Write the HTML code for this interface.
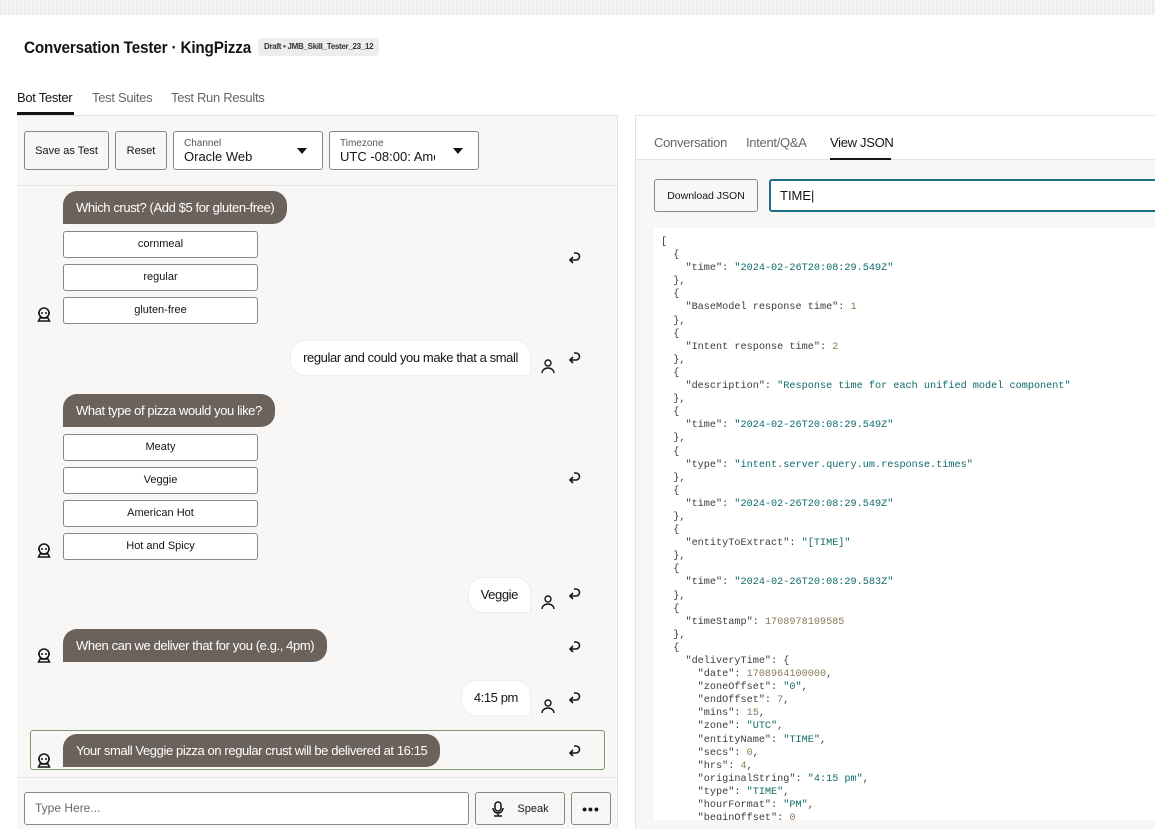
<!DOCTYPE html>
<html><head><meta charset="utf-8">
<style>
*{box-sizing:border-box;margin:0;padding:0}
body{width:1155px;height:829px;overflow:hidden;background:#fff;font-family:"Liberation Sans",sans-serif;color:#161513;position:relative}
.a{position:absolute}
.topband{left:0;top:0;width:1155px;height:15px;background:repeating-linear-gradient(90deg,#ececec 0 2px,#f6f6f6 2px 4px,#e8e8e8 4px 5px,#f4f4f4 5px 8px)}
h1{position:absolute;left:24px;top:38px;font-size:17px;font-weight:bold;letter-spacing:-0.2px;transform:scaleX(0.9);transform-origin:left;white-space:nowrap}
.badge{left:258px;top:38px;height:18px;padding:0 6px;background:#eeedeb;border-radius:4px;font-size:8px;line-height:18px;color:#333;font-weight:bold;letter-spacing:-0.3px}
.tab{font-size:13px;color:#6a6763;letter-spacing:-0.3px}
.btn{position:absolute;border:1px solid #8b8883;border-radius:3px;background:#f8f7f5;font-size:11px;display:flex;align-items:center;justify-content:center;color:#161513}
.sel{position:absolute;border:1px solid #8b8883;border-radius:3px;background:#fff;padding:6px 10px}
.sel small{display:block;font-size:10px;color:#555;line-height:11px}
.sel span{display:block;font-size:13px;line-height:15px;white-space:nowrap;overflow:hidden;width:95px}
.sel i{position:absolute;right:15px;top:16px;border-left:5px solid transparent;border-right:5px solid transparent;border-top:6px solid #161513}
.bb{position:absolute;background:#6b625c;color:#fff;font-size:13px;letter-spacing:-0.4px;line-height:33px;padding:0 13px;border-radius:14px 14px 14px 0;height:33px;white-space:nowrap}
.ub{position:absolute;background:#fff;font-size:13px;letter-spacing:-0.4px;line-height:34px;padding:0 12px;border-radius:14px 14px 0 14px;height:34px;white-space:nowrap;box-shadow:0 0 0 1px #eee}
.opt{position:absolute;left:63px;width:195px;height:27px;border:1px solid #8b8883;border-radius:3px;background:#fff;font-size:11px;text-align:center;line-height:25px}
pre{position:absolute;left:661px;top:236px;font-family:"Liberation Mono",monospace;font-size:10.2px;line-height:13.1px;color:#3c3c3c}
.s{color:#0e6a6a}.n{color:#8a7a55}
</style></head><body>
<div class="a topband"></div>
<h1>Conversation Tester · KingPizza</h1>
<div class="a badge">Draft • JMB_Skill_Tester_23_12</div>

<div class="a tab" style="left:17px;top:90px;color:#161513">Bot Tester</div>
<div class="a" style="left:17px;top:112px;width:57px;height:3px;background:#161513"></div>
<div class="a tab" style="left:92px;top:90px">Test Suites</div>
<div class="a tab" style="left:171px;top:90px">Test Run Results</div>

<div class="a" style="left:17px;top:115px;width:601px;height:714px;background:#f8f7f5;border-top:1px solid #e4e2df;border-right:1px solid #e4e2df"></div>
<div class="btn" style="left:24px;top:131px;width:85px;height:39px">Save as Test</div>
<div class="btn" style="left:115px;top:131px;width:52px;height:39px">Reset</div>
<div class="sel" style="left:173px;top:131px;width:150px;height:39px"><small>Channel</small><span>Oracle Web</span><i></i></div>
<div class="sel" style="left:329px;top:131px;width:150px;height:39px"><small>Timezone</small><span>UTC -08:00: Ame</span><i></i></div>
<div class="a" style="left:17px;top:185px;width:600px;height:1px;background:#e6e4e1"></div>

<svg width="0" height="0" style="position:absolute"><defs>
<g id="bot"><circle cx="7" cy="6" r="5" fill="none" stroke="#161513" stroke-width="1.6"/><circle cx="5" cy="6" r="1" fill="#161513"/><circle cx="9" cy="6" r="1" fill="#161513"/><path d="M1 6h1M12 6h1M3 11h8l1.5 3h-11z" fill="none" stroke="#161513" stroke-width="1.5"/></g>
<g id="usr"><circle cx="7" cy="4" r="3" fill="none" stroke="#161513" stroke-width="1.4"/><path d="M1 14a6 5 0 0 1 12 0" fill="none" stroke="#161513" stroke-width="1.4"/></g>
<g id="ret"><path d="M6 2h2a3.5 3.5 0 0 1 0 7H2M5 6l-3 3 3 3" fill="none" stroke="#161513" stroke-width="1.6"/></g>
</defs></svg>

<div class="bb" style="left:63px;top:191px">Which crust? (Add $5 for gluten-free)</div>
<div class="opt" style="top:231px">cornmeal</div>
<div class="opt" style="top:264px">regular</div>
<div class="opt" style="top:297px">gluten-free</div>
<svg class="a" style="left:37px;top:307px" width="15" height="15"><use href="#bot"/></svg>
<svg class="a" style="left:568px;top:251px" width="14" height="14"><use href="#ret"/></svg>

<div class="ub" style="right:625px;top:341px">regular and could you make that a small</div>
<svg class="a" style="left:541px;top:359px" width="15" height="16"><use href="#usr"/></svg>
<svg class="a" style="left:568px;top:351px" width="14" height="14"><use href="#ret"/></svg>

<div class="bb" style="left:63px;top:394px">What type of pizza would you like?</div>
<div class="opt" style="top:434px">Meaty</div>
<div class="opt" style="top:467px">Veggie</div>
<div class="opt" style="top:500px">American Hot</div>
<div class="opt" style="top:533px">Hot and Spicy</div>
<svg class="a" style="left:37px;top:543px" width="15" height="15"><use href="#bot"/></svg>
<svg class="a" style="left:568px;top:471px" width="14" height="14"><use href="#ret"/></svg>

<div class="ub" style="right:625px;top:578px">Veggie</div>
<svg class="a" style="left:541px;top:595px" width="15" height="16"><use href="#usr"/></svg>
<svg class="a" style="left:568px;top:587px" width="14" height="14"><use href="#ret"/></svg>

<div class="bb" style="left:63px;top:629px">When can we deliver that for you (e.g., 4pm)</div>
<svg class="a" style="left:37px;top:648px" width="15" height="15"><use href="#bot"/></svg>
<svg class="a" style="left:568px;top:640px" width="14" height="14"><use href="#ret"/></svg>

<div class="ub" style="right:625px;top:681px">4:15 pm</div>
<svg class="a" style="left:541px;top:699px" width="15" height="16"><use href="#usr"/></svg>
<svg class="a" style="left:568px;top:691px" width="14" height="14"><use href="#ret"/></svg>

<div class="a" style="left:30px;top:730px;width:575px;height:40px;border:1px solid #7a9a6e;border-radius:3px;background:#f8f7f5"></div>
<div class="bb" style="left:63px;top:734px">Your small Veggie pizza on regular crust will be delivered at 16:15</div>
<svg class="a" style="left:37px;top:753px" width="15" height="15"><use href="#bot"/></svg>
<svg class="a" style="left:568px;top:744px" width="14" height="14"><use href="#ret"/></svg>

<div class="a" style="left:17px;top:777px;width:600px;height:1px;background:#e6e4e1"></div>
<div class="a" style="left:24px;top:792px;width:445px;height:33px;border:1px solid #8b8883;border-radius:3px;background:#fff;font-size:12px;line-height:31px;padding-left:10px;color:#6a6763">Type Here...</div>
<div class="btn" style="left:475px;top:792px;width:90px;height:33px;background:#f8f7f5"><svg width="14" height="16" style="margin-right:12px"><rect x="4" y="1" width="6" height="9" rx="3" fill="none" stroke="#161513" stroke-width="1.5"/><path d="M2 7a5 5 0 0 0 10 0M7 12v3M3 15h8" fill="none" stroke="#161513" stroke-width="1.5"/></svg>Speak</div>
<div class="btn" style="left:571px;top:792px;width:40px;height:33px;font-weight:bold;font-size:14px;letter-spacing:1px">•••</div>

<div class="a" style="left:635px;top:115px;width:520px;height:714px;background:#f8f7f5;border-left:1px solid #e4e2df;border-top:1px solid #e4e2df"></div>
<div class="a" style="left:636px;top:116px;width:519px;height:44px;background:#fff;border-bottom:1px solid #e4e2df"></div>
<div class="a tab" style="left:654px;top:135px">Conversation</div>
<div class="a tab" style="left:746px;top:135px">Intent/Q&amp;A</div>
<div class="a tab" style="left:830px;top:135px;color:#161513">View JSON</div>
<div class="a" style="left:830px;top:158px;width:61px;height:2px;background:#161513"></div>

<div class="btn" style="left:654px;top:179px;width:104px;height:33px;font-size:10.5px">Download JSON</div>
<div class="a" style="left:769px;top:179px;width:390px;height:33px;border:2px solid #1f6f8b;border-radius:3px;background:#fff;font-size:13px;line-height:29px;padding-left:9px">TIME|</div>

<div class="a" style="left:654px;top:228px;width:501px;height:592px;background:#fff"></div>
<pre>[
  {
    "time": <span class="s">"2024-02-26T20:08:29.549Z"</span>
  },
  {
    "BaseModel response time": <span class="n">1</span>
  },
  {
    "Intent response time": <span class="n">2</span>
  },
  {
    "description": <span class="s">"Response time for each unified model component"</span>
  },
  {
    "time": <span class="s">"2024-02-26T20:08:29.549Z"</span>
  },
  {
    "type": <span class="s">"intent.server.query.um.response.times"</span>
  },
  {
    "time": <span class="s">"2024-02-26T20:08:29.549Z"</span>
  },
  {
    "entityToExtract": <span class="s">"[TIME]"</span>
  },
  {
    "time": <span class="s">"2024-02-26T20:08:29.583Z"</span>
  },
  {
    "timeStamp": <span class="n">1708978109585</span>
  },
  {
    "deliveryTime": {
      "date": <span class="n">1708964100000</span>,
      "zoneOffset": <span class="s">"0"</span>,
      "endOffset": <span class="n">7</span>,
      "mins": <span class="n">15</span>,
      "zone": <span class="s">"UTC"</span>,
      "entityName": <span class="s">"TIME"</span>,
      "secs": <span class="n">0</span>,
      "hrs": <span class="n">4</span>,
      "originalString": <span class="s">"4:15 pm"</span>,
      "type": <span class="s">"TIME"</span>,
      "hourFormat": <span class="s">"PM"</span>,
      "beginOffset": <span class="n">0</span></pre>
<div class="a" style="left:654px;top:820px;width:501px;height:9px;background:#f8f7f5"></div>
</body></html>
